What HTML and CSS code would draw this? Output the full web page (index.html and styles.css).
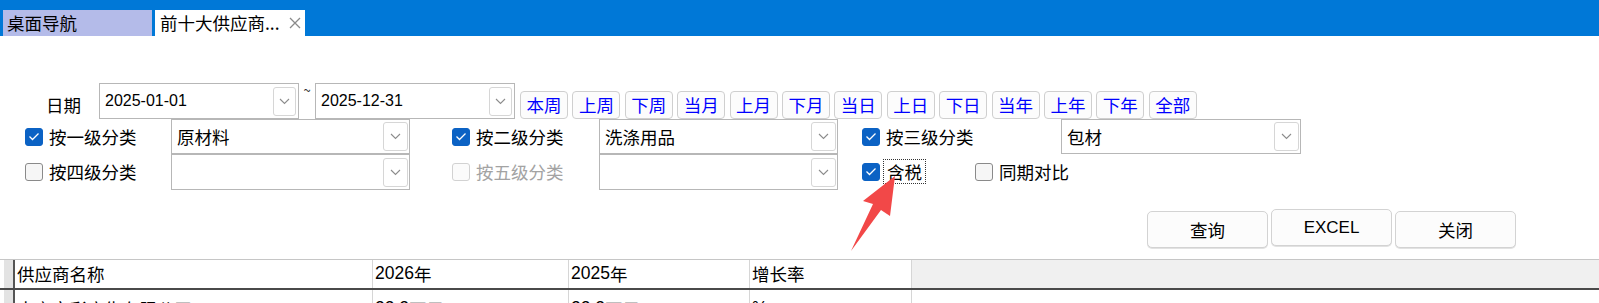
FILE: index.html
```html
<!DOCTYPE html>
<html lang="zh-CN">
<head>
<meta charset="utf-8">
<title>前十大供应商</title>
<link rel="stylesheet" href="styles.css">
</head>
<body>
<div class="tabbar">
  <div class="tab tab-home">桌面导航</div>
  <div class="tab tab-active"><span>前十大供应商...</span><svg class="close" width="12" height="12" viewBox="0 0 12 12"><path d="M1 1L11 11M11 1L1 11" stroke="#8a8a8a" stroke-width="1.3" fill="none"/></svg></div>
</div>

<div class="form">
  <div class="date-row">
    <div class="date-label">日期</div>
    <div class="field date-input"><span class="val num">2025-01-01</span><span class="dd"><svg width="11" height="7" viewBox="0 0 11 7"><path d="M1 1L5.5 5.5L10 1" stroke="#8c8c8c" stroke-width="1.1" fill="none"/></svg></span></div>
    <div class="tilde">~</div>
    <div class="field date-input"><span class="val num">2025-12-31</span><span class="dd"><svg width="11" height="7" viewBox="0 0 11 7"><path d="M1 1L5.5 5.5L10 1" stroke="#8c8c8c" stroke-width="1.1" fill="none"/></svg></span></div>
    <div class="quick">
      <div class="qb">本周</div><div class="qb">上周</div><div class="qb">下周</div><div class="qb">当月</div><div class="qb">上月</div><div class="qb">下月</div><div class="qb">当日</div><div class="qb">上日</div><div class="qb">下日</div><div class="qb">当年</div><div class="qb">上年</div><div class="qb">下年</div><div class="qb">全部</div>
    </div>
  </div>

  <div class="filters">
    <div class="cell c-a"><span class="cb on"><svg width="12" height="9" viewBox="0 0 12 9"><path d="M1.5 4.5L4.5 7.5L10.5 1.5" stroke="#fff" stroke-width="1.3" fill="none"/></svg></span><span>按一级分类</span></div>
    <div class="field combo"><span class="val">原材料</span><span class="dd wide"><svg width="11" height="7" viewBox="0 0 11 7"><path d="M1 1L5.5 5.5L10 1" stroke="#8c8c8c" stroke-width="1.1" fill="none"/></svg></span></div>
    <div class="cell c-c"><span class="cb on"><svg width="12" height="9" viewBox="0 0 12 9"><path d="M1.5 4.5L4.5 7.5L10.5 1.5" stroke="#fff" stroke-width="1.3" fill="none"/></svg></span><span>按二级分类</span></div>
    <div class="field combo"><span class="val">洗涤用品</span><span class="dd wide"><svg width="11" height="7" viewBox="0 0 11 7"><path d="M1 1L5.5 5.5L10 1" stroke="#8c8c8c" stroke-width="1.1" fill="none"/></svg></span></div>
    <div class="cell c-e"><span class="cb on"><svg width="12" height="9" viewBox="0 0 12 9"><path d="M1.5 4.5L4.5 7.5L10.5 1.5" stroke="#fff" stroke-width="1.3" fill="none"/></svg></span><span>按三级分类</span></div>
    <div class="field combo"><span class="val">包材</span><span class="dd wide"><svg width="11" height="7" viewBox="0 0 11 7"><path d="M1 1L5.5 5.5L10 1" stroke="#8c8c8c" stroke-width="1.1" fill="none"/></svg></span></div>

    <div class="cell c-a"><span class="cb"></span><span>按四级分类</span></div>
    <div class="field combo second"><span class="val"></span><span class="dd wide"><svg width="11" height="7" viewBox="0 0 11 7"><path d="M1 1L5.5 5.5L10 1" stroke="#8c8c8c" stroke-width="1.1" fill="none"/></svg></span></div>
    <div class="cell c-c"><span class="cb dis"></span><span class="disabled">按五级分类</span></div>
    <div class="field combo second"><span class="val"></span><span class="dd wide"><svg width="11" height="7" viewBox="0 0 11 7"><path d="M1 1L5.5 5.5L10 1" stroke="#8c8c8c" stroke-width="1.1" fill="none"/></svg></span></div>
    <div class="cell c-e tight span2"><span class="cb on"><svg width="12" height="9" viewBox="0 0 12 9"><path d="M1.5 4.5L4.5 7.5L10.5 1.5" stroke="#fff" stroke-width="1.3" fill="none"/></svg></span><span class="focus">含税</span><span class="cb compare"></span><span class="lbl-compare">同期对比</span></div>
  </div>

  <div class="actions">
    <div class="btn">查询</div>
    <div class="btn btn-excel num">EXCEL</div>
    <div class="btn">关闭</div>
  </div>
</div>

<div class="grid-table">
  <div class="tr thead">
    <div class="ind"></div>
    <div class="td w-name">供应商名称</div>
    <div class="td w-y1"><span class="num">2026</span>年</div>
    <div class="td w-y2"><span class="num">2025</span>年</div>
    <div class="td w-rate">增长率</div>
    <div class="fill"></div>
  </div>
  <div class="tr tbody">
    <div class="ind"></div>
    <div class="td w-name">南京市彩广告有限公司</div>
    <div class="td w-y1"><span class="num">22.2</span>万元</div>
    <div class="td w-y2"><span class="num">22.2</span>万元</div>
    <div class="td w-rate"><span class="num">%</span></div>
    <div class="fill white"></div>
  </div>
</div>

<svg class="arrow" width="1599" height="303" viewBox="0 0 1599 303">
  <polygon points="895,176 890,216 881,210 851,251 873,204 863,201" fill="#f24848"/>
</svg>
</body>
</html>
```

FILE: styles.css
```css
* { box-sizing: border-box; }

html, body {
  margin: 0;
  padding: 0;
}

body {
  width: 1599px;
  height: 303px;
  overflow: hidden;
  position: relative;
  background: #fff;
  color: #000;
  font-family: "Noto Sans CJK SC", "Liberation Sans", sans-serif;
  font-size: 17.5px;
}

.num {
  font-family: "Liberation Sans", "Noto Sans CJK SC", sans-serif;
}

/* tab bar */
.tabbar {
  height: 36px;
  background: #0078d7;
  display: flex;
  align-items: flex-end;
  padding-left: 3px;
  gap: 3px;
}

.tab {
  height: 26px;
  display: flex;
  align-items: center;
  line-height: 1;
  font-size: 17.5px;
  white-space: nowrap;
}

.tab-home {
  width: 149px;
  background: #b4bbe9;
  padding-left: 4px;
}

.tab-active {
  width: 150px;
  background: #fff;
  padding-left: 5px;
}

.close {
  margin-left: 9px;
}

/* form */
.form {
  padding-top: 47px;
}

.date-row {
  display: flex;
  align-items: flex-start;
  height: 36px;
}

.date-label {
  width: 99px;
  padding-left: 46px;
  padding-top: 4px;
  line-height: 36px;
  height: 36px;
}

.field {
  border: 1px solid #b7b7b7;
  background: #fff;
  display: flex;
  align-items: center;
}

.date-input {
  width: 200px;
  height: 36px;
  padding-left: 5px;
  font-size: 16px;
}

.val {
  flex: 1;
  line-height: 1;
  white-space: nowrap;
}

.dd {
  width: 23px;
  height: 29px;
  margin-right: 2px;
  border: 1px solid #d6d6d6;
  border-radius: 3px;
  background: #fff;
  display: flex;
  align-items: center;
  justify-content: center;
}

.dd.wide {
  width: 25px;
  margin-right: 1px;
}

.tilde {
  width: 16px;
  text-align: center;
  font-size: 13px;
  line-height: 1;
  color: #333;
}

.quick {
  display: flex;
  gap: 4.4px;
  margin-left: 5px;
  margin-top: 8px;
}

.qb {
  width: 48px;
  height: 28px;
  border: 1px solid #cfcfcf;
  border-radius: 4px;
  background: #fcfcfc;
  color: #0000ff;
  display: flex;
  align-items: center;
  justify-content: center;
  line-height: 1;
}

/* filters */
.filters {
  display: grid;
  grid-template-columns: 171px 239px 189px 239px 223px 240px;
  grid-template-rows: 35px 35px;
}

.cell {
  display: flex;
  align-items: center;
  gap: 6px;
  line-height: 1;
  white-space: nowrap;
}

.c-a { padding-left: 25px; }
.c-c { padding-left: 42px; }
.c-e { padding-left: 24px; }
.tight { gap: 3px; }
.span2 { grid-column: span 2; }

.combo {
  padding-left: 5px;
  height: 35px;
}

.combo.second {
  height: 36px;
}

.cb {
  width: 18px;
  height: 18px;
  flex: none;
  border: 1px solid #8a8a8a;
  border-radius: 3px;
  background: #f6f6f6;
  display: flex;
  align-items: center;
  justify-content: center;
}

.cb.on {
  background: #0b62c4;
  border-color: #0b62c4;
}

.cb.dis {
  border-color: #d2d2d2;
  background: #fbfbfb;
}

.disabled {
  color: #a3a3a3;
}

.focus {
  border: 1px dotted #333;
  height: 25px;
  padding: 0 3px;
  display: flex;
  align-items: center;
}

.cb.compare {
  margin-left: 46px;
}

.lbl-compare {
  margin-left: 3px;
}

/* actions */
.actions {
  display: flex;
  align-items: flex-start;
  gap: 3px;
  padding-left: 1147px;
  margin-top: 22px;
  height: 37px;
}

.btn {
  width: 121px;
  height: 37px;
  border: 1px solid #d3d3d3;
  border-radius: 5px;
  background: #fcfcfc;
  box-shadow: 0 1px 0 #e2e2e2;
  display: flex;
  align-items: center;
  justify-content: center;
  line-height: 1;
}

.btn-excel {
  font-size: 17px;
  margin-top: -2px;
}

/* grid */
.grid-table {
  margin-top: 11px;
  border-top: 1px solid #c6c6c6;
}

.tr {
  display: flex;
  height: 29px;
}

.thead {
  height: 30px;
  border-bottom: 2px solid #4a4a4a;
  background: #f0f0f0;
}

.ind {
  width: 15px;
  flex: none;
  background: #e3e3e3;
  border-left: 4px solid #fff;
  border-right: 2px solid #555;
}

.td {
  flex: none;
  background: #fff;
  border-right: 1px solid #d6d6d6;
  padding-left: 2px;
  display: flex;
  align-items: center;
  line-height: 1;
  white-space: nowrap;
  overflow: hidden;
}

.tbody .td {
  align-items: flex-start;
  padding-top: 10px;
}

.w-name { width: 358px; }
.w-y1 { width: 196px; }
.w-y2 { width: 181px; }
.w-rate { width: 162px; }

.fill {
  flex: 1;
  background: #f0f0f0;
}

.fill.white {
  background: #fff;
}

/* overlay arrow */
.arrow {
  position: absolute;
  left: 0;
  top: 0;
  pointer-events: none;
}
```
